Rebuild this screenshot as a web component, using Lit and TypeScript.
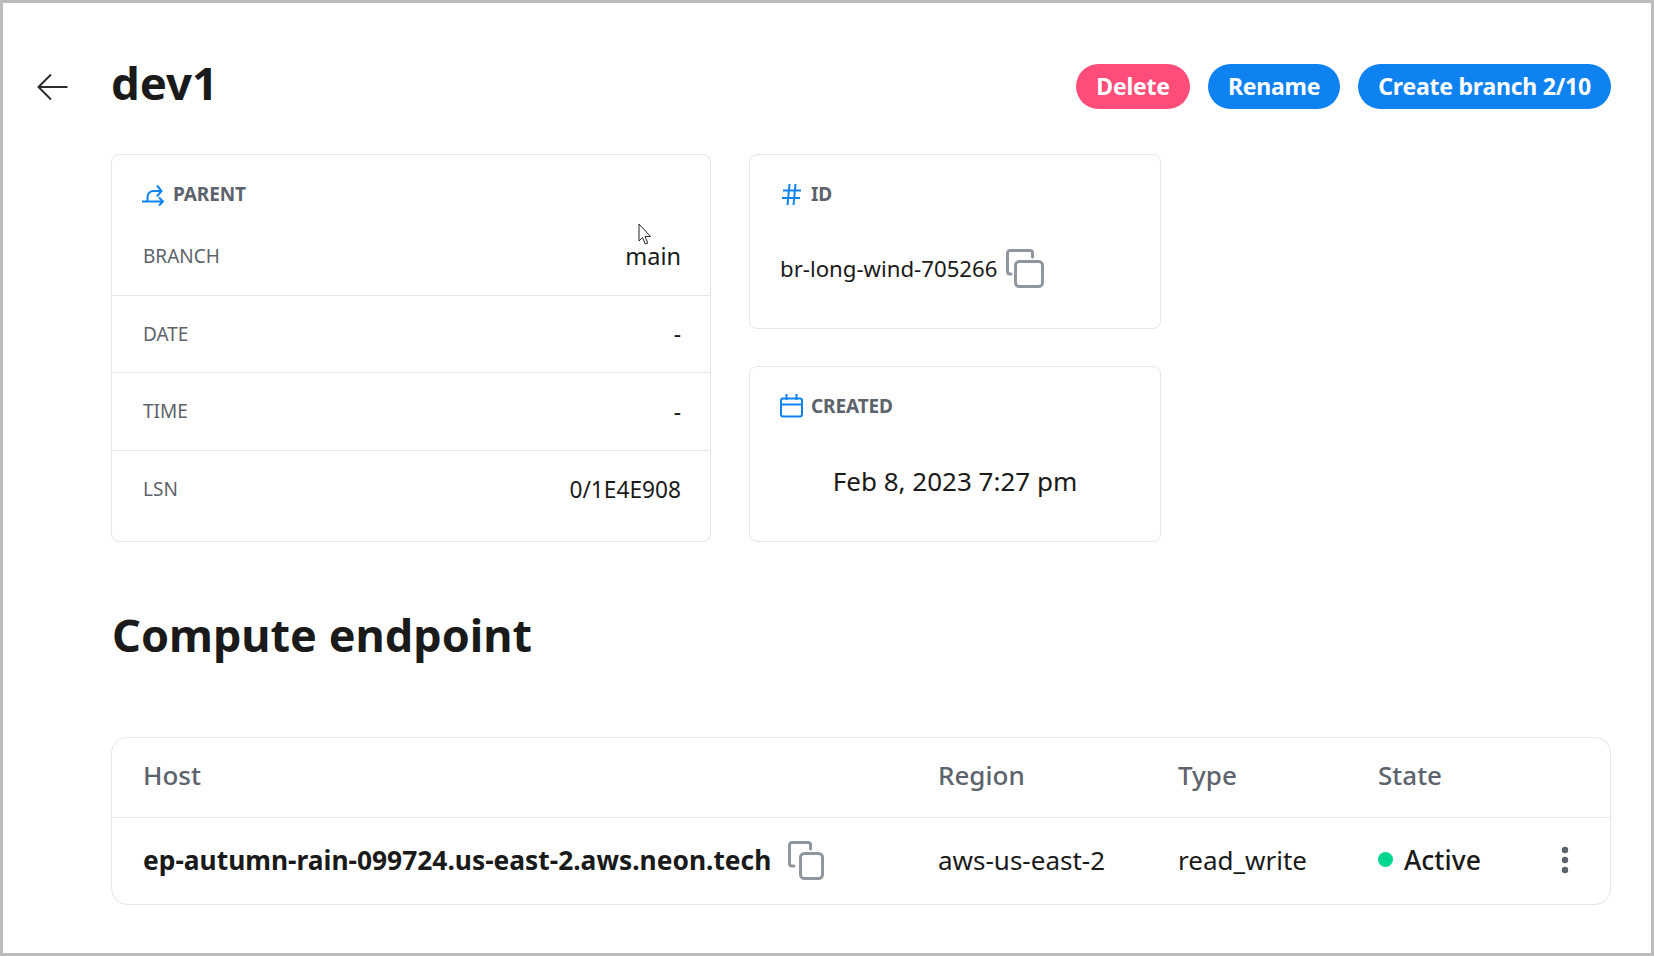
import { LitElement, html, css, svg } from "lit";
import { customElement } from "lit/decorators.js";

const copyWide = svg`<rect x="9.5" y="12.5" width="27" height="25" rx="4" fill="none" stroke="#8f96a0" stroke-width="3"/><path d="M5 25H4a2.500 2.500 0 0 1-2.500-2.500V4A2.500 2.500 0 0 1 4 1.500h20A2.500 2.500 0 0 1 26.500 4v4" fill="none" stroke="#8f96a0" stroke-width="3" stroke-linecap="round"/>`;
const copyTall = svg`<rect x="12.5" y="12.5" width="22" height="25" rx="4" fill="none" stroke="#8f96a0" stroke-width="3"/><path d="M6 25H4a2.500 2.500 0 0 1-2.500-2.500V4A2.500 2.500 0 0 1 4 1.500h16A2.500 2.500 0 0 1 22.500 4v4" fill="none" stroke="#8f96a0" stroke-width="3" stroke-linecap="round"/>`;

@customElement("app-root")
export class AppRoot extends LitElement {
  static styles = css`
    :host { display: block; width: 1654px; height: 956px; box-sizing: border-box; border: 3px solid #bcbcbc; background: #fff; position: relative; font-family: "Noto Sans", sans-serif; color: #1a1a1a; overflow: hidden; }
    .page { display: flex; flex-direction: column; padding: 61px 40px 0 34px; }
    .head { display: flex; align-items: center; height: 45px; }
    .back { width: 74px; display: flex; flex: none; }
    h1 { margin: 0; font-size: 45.500px; line-height: 45px; font-weight: 700; flex: 1; position: relative; top: -4px; }
    .btns { display: flex; gap: 18px; }
    .btn { height: 45px; border-radius: 23px; background: #0f82f2; color: #fff; font-size: 23px; line-height: 44px; font-weight: 700; letter-spacing: -0.22px; padding: 0 20px; box-sizing: border-box; }
    .btn.del { background: #ff4c79; }
    .cards { display: grid; grid-template-columns: 600px 412px; grid-template-rows: 175px 176px; column-gap: 38px; row-gap: 37px; margin: 45px 0 0 74px; }
    .card { border: 1px solid #e4e6e8; border-radius: 8px; box-sizing: border-box; }
    .parent { grid-row: 1 / 3; display: flex; flex-direction: column; }
    .label { display: flex; align-items: center; gap: 8px; height: 24px; font-size: 19px; font-weight: 700; letter-spacing: -0.1px; color: #5c636c; }
    .label svg { flex: none; width: 23px; height: 24px; }
    .parent .label { margin: 27px 0 0 30px; }
    .row { display: flex; justify-content: space-between; align-items: center; padding: 0 29px 0 31px; height: 77.500px; box-sizing: border-box; border-bottom: 1px solid #e4e6e8; font-size: 22.700px; }
    .row:last-child { border-bottom: 0; }
    .row span:first-child { font-size: 19px; color: #5c636c; }
    .row .main { font-size: 23.500px; }
    .rows { margin-top: 12px; }
    .side { padding: 27px 30px 0; }
    .idv { display: flex; align-items: center; gap: 9px; margin-top: 43px; font-size: 22.200px; line-height: 38px; }
    .date { text-align: center; font-size: 26px; margin-top: 44px; line-height: 38px; }
    h2 { margin: 63px 0 0 75px; font-size: 45px; font-weight: 700; line-height: 60px; }
    .table { margin: 72px 0 0 74px; border: 1px solid #e4e6e8; border-radius: 16px; height: 168px; box-sizing: border-box; }
    .tr { display: grid; grid-template-columns: 795px 240px 200px 1fr; align-items: center; padding-left: 31px; }
    .th { height: 80px; border-bottom: 1px solid #e4e6e8; font-size: 26px; color: #5c636c; font-weight: 500; box-sizing: border-box; padding-bottom: 5px; }
    .td { height: 85px; font-size: 26px; padding-bottom: 2px; box-sizing: border-box; }
    .host { display: flex; align-items: center; gap: 17px; font-weight: 700; font-size: 26.350px; }
    .host svg { position: relative; top: 1px; }
    .state { display: flex; align-items: center; font-weight: 500; font-size: 26.500px; }
    .dot { width: 15px; height: 15px; border-radius: 50%; background: #00d68f; margin-right: 11px; }
    .kebab { margin-left: auto; margin-right: 41px; display: flex; }
    .cursor { position: absolute; left: 635px; top: 220px; }
  `;

  render() {
    return html`
      <div class="page">
        <div class="head">
          <div class="back"><svg width="32" height="28" viewBox="0 0 32 28"><path d="M30.500 14H2M14 1.500 1.500 14 14 26.500" fill="none" stroke="#2b2b2b" stroke-width="2"/></svg></div>
          <h1>dev1</h1>
          <div class="btns">
            <div class="btn del">Delete</div>
            <div class="btn">Rename</div>
            <div class="btn">Create branch 2/10</div>
          </div>
        </div>
        <div class="cards">
          <div class="card parent">
            <div class="label">
              <svg viewBox="0 0 23 24"><path d="M0 19.500h21M17 15.500l4 4-4 4M5.500 19v-4a6 6 0 0 1 6-6h8M15 3.500l4.500 5.500-4.500 5.500" fill="none" stroke="#0f82f2" stroke-width="2"/></svg>
              PARENT
            </div>
            <div class="rows">
              <div class="row"><span>BRANCH</span><span class="main">main</span></div>
              <div class="row"><span>DATE</span><span>-</span></div>
              <div class="row"><span>TIME</span><span>-</span></div>
              <div class="row"><span>LSN</span><span>0/1E4E908</span></div>
            </div>
          </div>
          <div class="card side">
            <div class="label">
              <svg viewBox="0 0 23 24"><path d="M3 8.500h18M2 16h18M9.500 2 7.500 23M15.500 2l-2 21" fill="none" stroke="#0f82f2" stroke-width="2"/></svg>
              ID
            </div>
            <div class="idv">br-long-wind-705266
              <svg width="39" height="39" viewBox="0 0 39 39">${copyWide}</svg>
            </div>
          </div>
          <div class="card side">
            <div class="label">
              <svg viewBox="0 0 23 24"><rect x="1" y="4.500" width="21" height="18" rx="2" fill="none" stroke="#0f82f2" stroke-width="2"/><path d="M1 10.500h21M6.500 0v6M16.500 0v6" fill="none" stroke="#0f82f2" stroke-width="2"/></svg>
              CREATED
            </div>
            <div class="date">Feb 8, 2023 7:27 pm</div>
          </div>
        </div>
        <h2>Compute endpoint</h2>
        <div class="table">
          <div class="tr th"><span>Host</span><span>Region</span><span>Type</span><span>State</span></div>
          <div class="tr td">
            <span class="host">ep-autumn-rain-099724.us-east-2.aws.neon.tech
              <svg width="37" height="39" viewBox="0 0 37 39">${copyTall}</svg></span>
            <span>aws-us-east-2</span>
            <span>read_write</span>
            <span class="state"><i class="dot"></i>Active
              <span class="kebab"><svg width="8" height="28" viewBox="0 0 8 28"><circle cx="4" cy="4" r="3.200" fill="#5c636c"/><circle cx="4" cy="14" r="3.200" fill="#5c636c"/><circle cx="4" cy="24" r="3.200" fill="#5c636c"/></svg></span>
            </span>
          </div>
        </div>
      </div>
      <svg class="cursor" width="14" height="24" viewBox="0 0 14 24"><path d="M1 1v17l3.500-3.500 2.800 6.500 2.500-1-2.800-6.500H12.500z" fill="#fff" stroke="#222" stroke-width="1"/></svg>
    `;
  }
}
